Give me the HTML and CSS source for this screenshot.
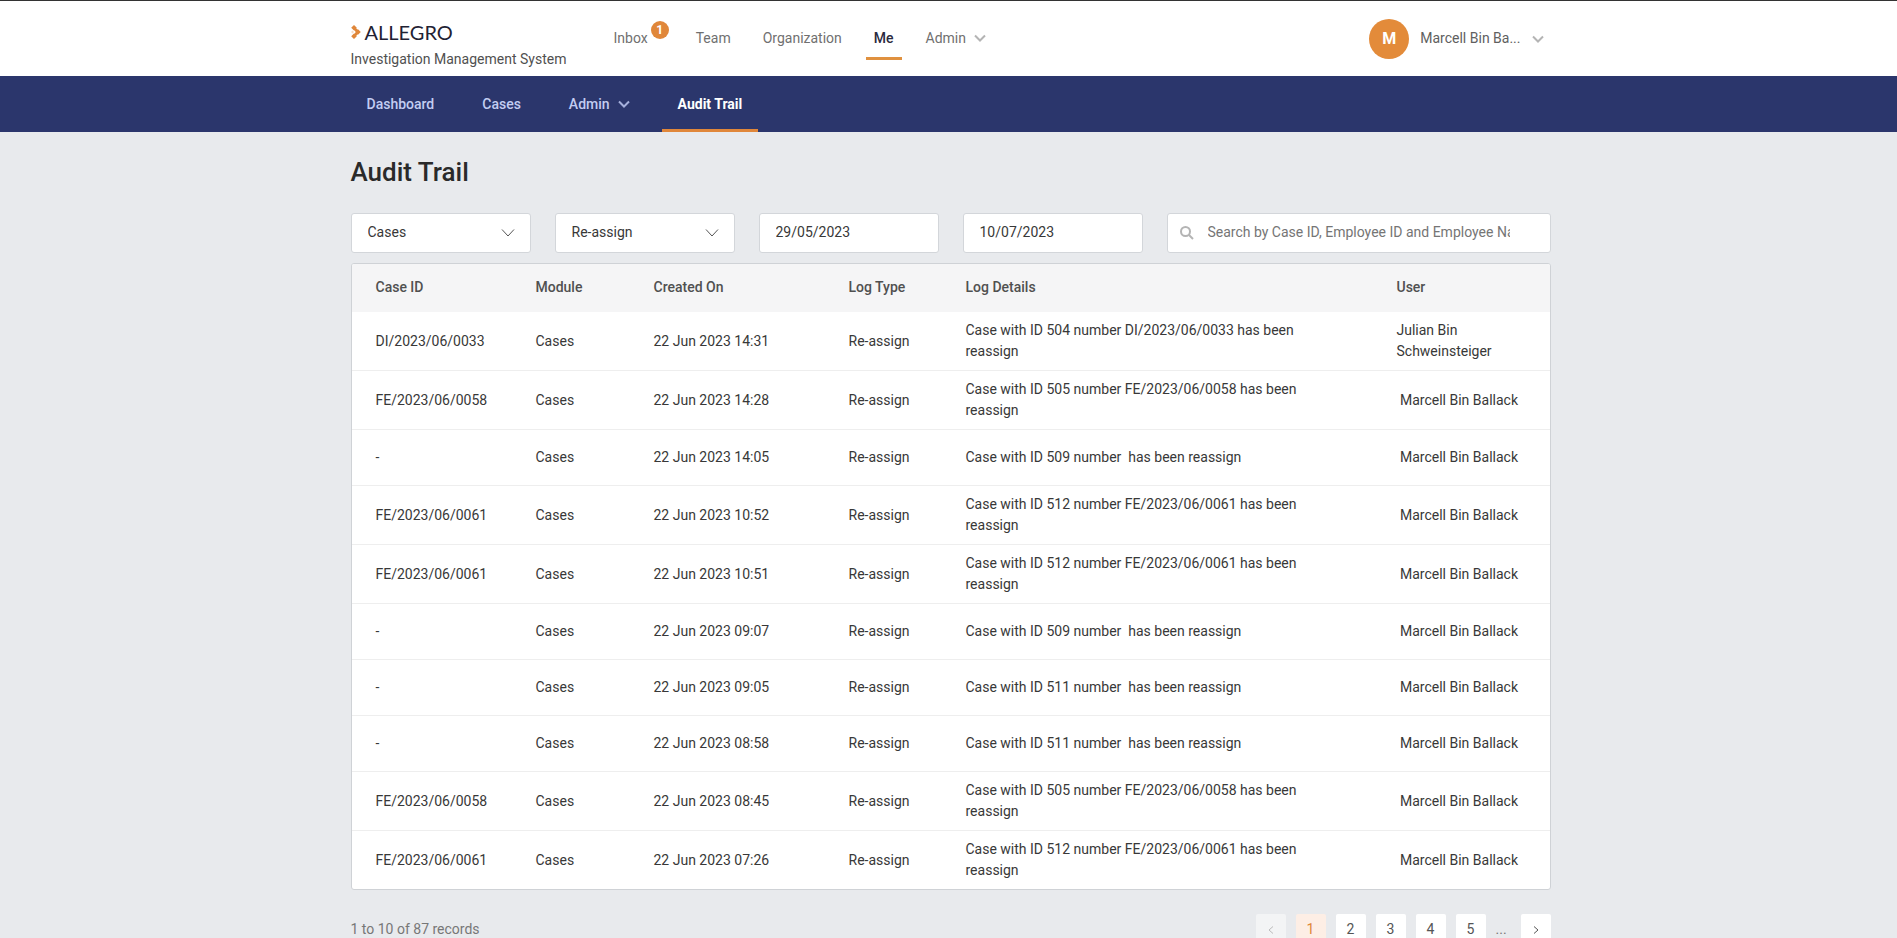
FILE: index.html
```html
<!DOCTYPE html>
<html lang="en">

<head>
  <meta charset="UTF-8">
  <meta name="viewport" content="width=device-width, initial-scale=1">
  <title>Audit Trail</title>
  <link rel="stylesheet" href="styles.css">
</head>

<body>
  <header class="topbar">
    <div class="container topbar-inner">
      <div class="brand">
        <div class="logo">
          <svg width="10" height="14" viewBox="0 0 10 14" fill="#e0873a">
            <path d="M3 0 5.800 2.800 3 5.600 .2 2.800zM7 4.200 9.800 7 7 9.800 4.200 7zM3 8.400 5.800 11.200 3 14 .2 11.200z" />
            <path d="M4.500 2.500 8 6 6 8 2.500 4.500zM6 6 8 8 4.500 11.500 2.500 9.500z" />
            <path d="M1.500 5.500 3 7 1.500 8.500 0 7z" opacity=".3" />
          </svg>
          <span>ALLEGRO</span>
        </div>
        <p>Investigation Management System</p>
      </div>
      <nav class="main-nav">
        <a class="inbox" href="#">Inbox<span class="badge">1</span></a>
        <a href="#">Team</a>
        <a href="#">Organization</a>
        <a class="active" href="#">Me</a>
        <a href="#">Admin
          <svg class="chevron" width="12" height="8" viewBox="0 0 12 8"><path d="M1 1.500 6 6.500 11 1.500" /></svg>
        </a>
      </nav>
      <button class="profile" type="button">
        <span class="avatar">M</span>
        <span>Marcell Bin Ba...</span>
        <svg class="chevron" width="12" height="8" viewBox="0 0 12 8"><path d="M1 1.500 6 6.500 11 1.500" /></svg>
      </button>
    </div>
  </header>

  <div class="subbar">
    <nav class="container sub-nav">
      <a href="#">Dashboard</a>
      <a href="#">Cases</a>
      <a href="#">Admin
        <svg class="chevron" width="12" height="8" viewBox="0 0 12 8"><path d="M1 1.500 6 6.500 11 1.500" /></svg>
      </a>
      <a class="active" href="#">Audit Trail</a>
    </nav>
  </div>

  <main class="container">
    <h1>Audit Trail</h1>

    <form class="filters">
      <div class="field">
        <select aria-label="Module">
          <option>Cases</option>
        </select>
        <svg class="arrow" width="14" height="8" viewBox="0 0 14 8"><path d="M1 .5 7 7 13 .5" /></svg>
      </div>
      <div class="field">
        <select aria-label="Log type">
          <option>Re-assign</option>
        </select>
        <svg class="arrow" width="14" height="8" viewBox="0 0 14 8"><path d="M1 .5 7 7 13 .5" /></svg>
      </div>
      <div class="field">
        <input type="text" value="29/05/2023" aria-label="From date">
      </div>
      <div class="field">
        <input type="text" value="10/07/2023" aria-label="To date">
      </div>
      <div class="field search">
        <svg width="14" height="14" viewBox="0 0 14 14"><circle cx="5.500" cy="5.500" r="4.500" /><path d="M9 9 13 13" /></svg>
        <input type="text" placeholder="Search by Case ID, Employee ID and Employee Name" aria-label="Search">
      </div>
    </form>

    <div class="card">
      <table>
        <colgroup>
          <col class="col-id">
          <col class="col-module">
          <col class="col-date">
          <col class="col-type">
          <col class="col-details">
          <col>
        </colgroup>
        <thead>
          <tr>
            <th>Case ID</th>
            <th>Module</th>
            <th>Created On</th>
            <th>Log Type</th>
            <th>Log Details</th>
            <th>User</th>
          </tr>
        </thead>
        <tbody>
          <tr>
            <td>DI/2023/06/0033</td>
            <td>Cases</td>
            <td>22 Jun 2023 14:31</td>
            <td>Re-assign</td>
            <td>Case with ID 504 number DI/2023/06/0033 has been reassign</td>
            <td>Julian Bin Schweinsteiger</td>
          </tr>
          <tr>
            <td>FE/2023/06/0058</td>
            <td>Cases</td>
            <td>22 Jun 2023 14:28</td>
            <td>Re-assign</td>
            <td>Case with ID 505 number FE/2023/06/0058 has been reassign</td>
            <td>&nbsp;Marcell Bin Ballack</td>
          </tr>
          <tr>
            <td>-</td>
            <td>Cases</td>
            <td>22 Jun 2023 14:05</td>
            <td>Re-assign</td>
            <td>Case with ID 509 number &nbsp;has been reassign</td>
            <td>&nbsp;Marcell Bin Ballack</td>
          </tr>
          <tr>
            <td>FE/2023/06/0061</td>
            <td>Cases</td>
            <td>22 Jun 2023 10:52</td>
            <td>Re-assign</td>
            <td>Case with ID 512 number FE/2023/06/0061 has been reassign</td>
            <td>&nbsp;Marcell Bin Ballack</td>
          </tr>
          <tr>
            <td>FE/2023/06/0061</td>
            <td>Cases</td>
            <td>22 Jun 2023 10:51</td>
            <td>Re-assign</td>
            <td>Case with ID 512 number FE/2023/06/0061 has been reassign</td>
            <td>&nbsp;Marcell Bin Ballack</td>
          </tr>
          <tr>
            <td>-</td>
            <td>Cases</td>
            <td>22 Jun 2023 09:07</td>
            <td>Re-assign</td>
            <td>Case with ID 509 number &nbsp;has been reassign</td>
            <td>&nbsp;Marcell Bin Ballack</td>
          </tr>
          <tr>
            <td>-</td>
            <td>Cases</td>
            <td>22 Jun 2023 09:05</td>
            <td>Re-assign</td>
            <td>Case with ID 511 number &nbsp;has been reassign</td>
            <td>&nbsp;Marcell Bin Ballack</td>
          </tr>
          <tr>
            <td>-</td>
            <td>Cases</td>
            <td>22 Jun 2023 08:58</td>
            <td>Re-assign</td>
            <td>Case with ID 511 number &nbsp;has been reassign</td>
            <td>&nbsp;Marcell Bin Ballack</td>
          </tr>
          <tr>
            <td>FE/2023/06/0058</td>
            <td>Cases</td>
            <td>22 Jun 2023 08:45</td>
            <td>Re-assign</td>
            <td>Case with ID 505 number FE/2023/06/0058 has been reassign</td>
            <td>&nbsp;Marcell Bin Ballack</td>
          </tr>
          <tr>
            <td>FE/2023/06/0061</td>
            <td>Cases</td>
            <td>22 Jun 2023 07:26</td>
            <td>Re-assign</td>
            <td>Case with ID 512 number FE/2023/06/0061 has been reassign</td>
            <td>&nbsp;Marcell Bin Ballack</td>
          </tr>
        </tbody>
      </table>
    </div>

    <div class="table-footer">
      <p>1 to 10 of 87 records</p>
      <div class="pagination">
        <button type="button" disabled aria-label="Previous">
          <svg width="6" height="8" viewBox="0 0 6 8"><path d="M5 .5 1 4 5 7.500" /></svg>
        </button>
        <button class="current" type="button">1</button>
        <button type="button">2</button>
        <button type="button">3</button>
        <button type="button">4</button>
        <button type="button">5</button>
        <span>...</span>
        <button type="button" aria-label="Next">
          <svg width="6" height="8" viewBox="0 0 6 8"><path d="M1 .5 5 4 1 7.500" /></svg>
        </button>
      </div>
    </div>
  </main>
</body>

</html>
```
FILE: styles.css
```css
*{
  box-sizing: border-box;
  margin: 0;
  padding: 0;
}

body{
  background: #e8eaed;
  color: #383838;
  font-family: Roboto, "Liberation Sans", sans-serif;
  font-size: 14px;
  line-height: 21px;
}
a{
  color: inherit;
  text-decoration: none;
}
button, input, select{
  font: inherit;
  color: inherit;
}
svg{
  flex: none;
}
.container{
  max-width: 1204px;
  margin: 0 auto;
  padding-left: 4px;
}
.chevron{
  fill: none;
  stroke: #b4b4b4;
  stroke-width: 2;
}

/* top bar */
.topbar{
  background: #fff;
  border-top: 1px solid #333;
}
.topbar-inner{
  display: flex;
  height: 75px;
}
.brand{
  width: 255px;
  padding-top: 19px;
  color: #505050;
}
.logo{
  display: flex;
  align-items: center;
  gap: 4px;
  height: 24px;
  margin-bottom: 5px;
  font-family: Lato, sans-serif;
  font-size: 20px;
  color: #1f2233;
}
.main-nav{
  display: flex;
  gap: 16px;
  padding-top: 26px;
  color: #707070;
}
.main-nav a{
  display: flex;
  align-items: center;
  gap: 8px;
  height: 33px;
  padding: 0 8px 8px;
  border-bottom: 3px solid transparent;
}
.main-nav .active{
  border-color: #e0913f;
  color: #2b2b40;
  font-weight: 500;
}
.main-nav .inbox{
  position: relative;
  margin-right: 16px;
}
.badge{
  position: absolute;
  top: -6px;
  right: -13px;
  width: 18px;
  height: 18px;
  border-radius: 50%;
  background: #e0873a;
  color: #fff;
  font-size: 12px;
  font-weight: 700;
  line-height: 18px;
  text-align: center;
}
.profile{
  display: flex;
  align-items: center;
  gap: 11px;
  margin-left: auto;
  padding-right: 7px;
  border: none;
  background: none;
  color: #606060;
}
.avatar{
  width: 40px;
  height: 40px;
  border-radius: 50%;
  background: #e38b3a;
  color: #fff;
  font-size: 16px;
  font-weight: 700;
  line-height: 40px;
  text-align: center;
}

/* module bar */
.subbar{
  background: #2b366c;
}
.sub-nav{
  display: flex;
  gap: 16px;
  color: #c3cdf2;
  font-weight: 500;
}
.sub-nav a{
  display: flex;
  align-items: center;
  gap: 8px;
  height: 56px;
  padding: 3px 16px 0;
  border-bottom: 3px solid transparent;
}
.sub-nav .active{
  border-color: #e0873a;
  color: #fff;
  font-weight: 700;
}
.sub-nav .chevron{
  stroke: #a5b0dc;
}

h1{
  padding: 24px 0 25px;
  font-size: 26px;
  font-weight: 500;
  line-height: 32px;
  color: #2a2a2a;
}

/* filters */
.filters{
  display: flex;
  gap: 24px;
  margin-bottom: 10px;
}
.field{
  position: relative;
  width: 180px;
}
.field input, .field select{
  display: block;
  width: 100%;
  height: 40px;
  padding: 0 16px 2px;
  border: 1px solid #d3d6da;
  border-radius: 3px;
  background: #fff;
  appearance: none;
  outline: none;
}
.field svg{
  position: absolute;
  fill: none;
  pointer-events: none;
}
.arrow{
  top: 16px;
  right: 16px;
  stroke: #555;
}
.search{
  flex: 1;
}
.search svg{
  top: 13px;
  left: 13px;
  stroke: #b4b4b4;
  stroke-width: 2;
}
.search input{
  padding-left: 40px;
  padding-right: 40px;
}
.search input::placeholder{
  color: #757575;
}

/* log table */
.card{
  border: 1px solid #cfd2d6;
  border-radius: 3px;
  background: #fff;
  overflow: hidden;
}
table{
  width: 100%;
  table-layout: fixed;
  border-collapse: separate;
  border-spacing: 0;
}
.col-id{ width: 176px; }
.col-module{ width: 118px; }
.col-date{ width: 195px; }
.col-type{ width: 117px; }
.col-details{ width: 431px; }
th, td{
  padding: 8px;
  text-align: left;
  vertical-align: middle;
}
th{
  height: 48px;
  padding-bottom: 9px;
  background: #f5f5f6;
  color: #505050;
  font-weight: 500;
}
td{
  height: 56px;
  border-bottom: 1px solid #eee;
}
th:first-child, td:first-child{
  padding-left: 24px;
}
td:nth-child(5){
  padding-right: 64px;
}
td:last-child{
  padding-right: 24px;
}
tbody tr:last-child td{
  border-bottom: none;
}

.table-footer{
  display: flex;
  justify-content: space-between;
  padding: 24px 0;
  color: #777;
}
.table-footer p{
  line-height: 30px;
}
.pagination{
  display: flex;
  gap: 10px;
}
.pagination button{
  width: 30px;
  height: 30px;
  border: none;
  border-radius: 2px;
  background: #fff;
  color: #555;
}
.pagination button:disabled{
  background: #f3f4f5;
  color: #bbb;
}
.pagination .current{
  background: #fdeee5;
  color: #e0873a;
}
.pagination span{
  width: 15px;
  line-height: 30px;
}
.pagination svg{
  fill: none;
  stroke: currentColor;
}
```
